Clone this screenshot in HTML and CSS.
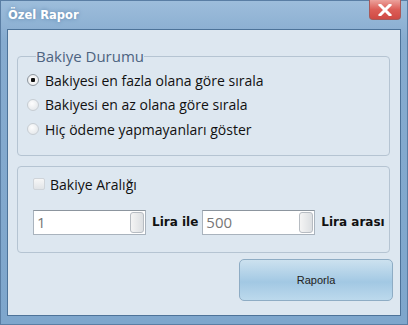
FILE: index.html
```html
<!DOCTYPE html>
<html lang="tr">

<head>
  <meta charset="UTF-8">
  <title>Özel Rapor</title>
  <link rel="stylesheet" href="styles.css">
</head>

<body>
  <div class="window">
    <div class="titlebar">
      <span class="title">Özel Rapor</span>
      <button class="close">
        <svg width="14" height="12" viewBox="0 0 14 12">
          <path d="M2 1 L12 11 M12 1 L2 11" stroke="#fff" stroke-width="3" stroke-linecap="square" />
        </svg>
      </button>
    </div>

    <div class="client">
      <fieldset class="group sort-group">
        <legend>Bakiye Durumu</legend>
        <label class="option"><span class="radio checked"></span>Bakiyesi en fazla olana göre sırala</label>
        <label class="option"><span class="radio"></span>Bakiyesi en az olana göre sırala</label>
        <label class="option"><span class="radio"></span>Hiç ödeme yapmayanları göster</label>
      </fieldset>

      <fieldset class="group range-group">
        <label class="option check-row"><span class="checkbox"></span>Bakiye Aralığı</label>
        <div class="range-row">
          <div class="spin">
            <span class="value">1</span>
            <span class="thumb"></span>
          </div>
          <span class="unit">Lira ile</span>
          <div class="spin">
            <span class="value">500</span>
            <span class="thumb"></span>
          </div>
          <span class="unit">Lira arası</span>
        </div>
      </fieldset>

      <div class="actions">
        <button class="report">Raporla</button>
      </div>
    </div>
  </div>
</body>

</html>
```

FILE: styles.css
```css
body {
  margin: 0;
  background: #fff;
}

.window {
  width: 408px;
  height: 325px;
  box-sizing: border-box;
  display: flex;
  flex-direction: column;
  background: linear-gradient(to bottom, #9dbddb, #86abcf 40px, #7ea6cc);
  border: 1px solid #5a7ea4;
}

.titlebar {
  height: 28px;
  display: flex;
  align-items: flex-start;
  justify-content: space-between;
}

.title {
  margin: 7px 0 0 7px;
  font-family: "DejaVu Sans", sans-serif;
  font-weight: bold;
  font-size: 11.5px;
  color: #fff;
  text-shadow: 0 0 4px #5d84ab;
}

.close {
  width: 32px;
  height: 20px;
  margin-right: 6px;
  margin-top: -1px;
  border: 1px solid #a65a5a;
  border-top: none;
  border-radius: 0 0 4px 4px;
  background: linear-gradient(to bottom, #eca29c, #dc5e57 50%, #cf4a44);
  display: flex;
  align-items: center;
  justify-content: center;
  padding: 0;
}

.client {
  flex: 1;
  margin: 0 6px 8px 6px;
  border: 1px solid #4d7399;
  background: #dde7f0;
  padding: 17px 10px 0 9px;
  display: flex;
  flex-direction: column;
}

.group {
  margin: 0;
  border: 1px solid #b5c4d2;
  border-radius: 4px;
  font-family: "Open Sans", sans-serif;
  font-size: 14px;
  color: #111;
}

.group legend {
  padding: 0;
  margin-left: 9px;
  font-size: 15px;
  line-height: 18px;
  color: #4d6380;
}

.sort-group {
  padding: 3px 0 13px 9px;
}

.option {
  display: flex;
  align-items: center;
  height: 24.5px;
  white-space: nowrap;
}

.radio {
  width: 12px;
  height: 12px;
  margin-right: 6px;
  border-radius: 50%;
  border: 1px solid #c7cdd3;
  background: radial-gradient(circle at 40% 35%, #fdfdfd, #dfe3e7);
  box-sizing: border-box;
}

.radio.checked {
  border-color: #8e969e;
  background: radial-gradient(circle, #111 0 2px, #f8f8f8 2.5px, #e2e5e8);
}

.range-group {
  margin-top: 10px;
  padding: 7px 0 17px 15px;
}

.check-row {
  height: 21px;
}

.checkbox {
  width: 12px;
  height: 12px;
  margin-right: 5px;
  border: 1px solid #cfd4d9;
  border-radius: 2px;
  background: linear-gradient(to bottom, #f7f7f7, #e1e4e7);
  box-sizing: border-box;
}

.range-row {
  display: flex;
  align-items: center;
  margin-top: 15px;
}

.spin {
  width: 113px;
  height: 25px;
  box-sizing: border-box;
  border: 1px solid #a9b3bd;
  border-top-color: #8c959e;
  background: #fff;
  display: flex;
  align-items: center;
  justify-content: space-between;
  padding: 0 1px 0 3px;
}

.value {
  font-size: 15px;
  color: #777;
}

.thumb {
  width: 14px;
  height: 21px;
  box-sizing: border-box;
  border: 1px solid #b7bcc2;
  border-radius: 3px;
  background: linear-gradient(to right, #f4f4f4, #dcdfe2);
}

.unit {
  font-family: "DejaVu Sans", sans-serif;
  font-weight: bold;
  font-size: 12px;
  color: #111;
  margin: 0 4px 0 6px;
}

.actions {
  display: flex;
  justify-content: flex-end;
  margin-top: 6px;
  margin-right: -3px;
}

.report {
  width: 154px;
  height: 42px;
  border: 1px solid #8eacc4;
  border-radius: 5px;
  background: linear-gradient(to bottom, #cce1ef, #aacde6 45%, #a2c8e3 55%, #bcd9ec);
  font-family: "Liberation Sans", sans-serif;
  font-size: 11px;
  color: #222;
}
```
